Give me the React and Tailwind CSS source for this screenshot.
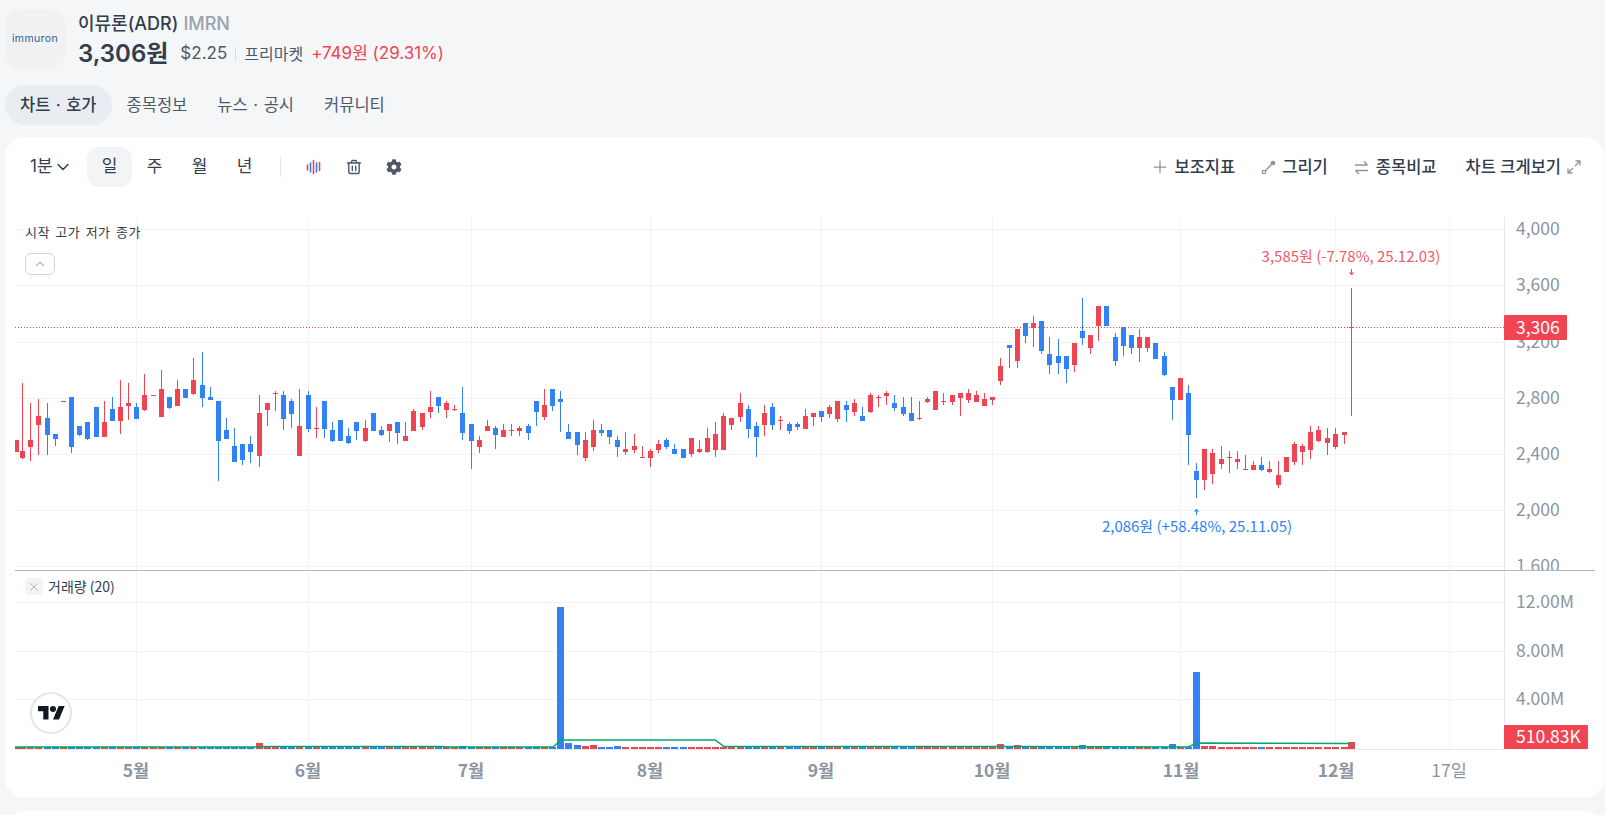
import React from "react";
import { ChevronDown, ChevronUp, Plus, X } from "lucide-react";
import { FaCog } from "react-icons/fa";

const RED = "#f04452";
const BLUE = "#3182f6";

// candles read off the picture: [colour, x, bodyTop, bodyBottom, wickTop, wickBottom], in 3x crop units
const group1 = [
  ["r",48,300,336],["r",67,333,354,129,357],["r",91,300,321,189,363],["r",115,228,255,177,345],["b",142,234,285,189,345],
  ["b",166,282,297,282,318],["r",190,183,186],["b",214,171,321,171,339],["b",238,258,285,258,288],["b",262,246,297,246,300],
  ["b",289,201,291],["r",313,246,291,183,291],["b",337,207,243,171,243],["r",361,201,243,120,282],["r",385,189,198,129,240],
  ["b",409,201,237,189,237],["r",433,165,210,102,213],["r",460,165,168],["r",484,147,231,90,231],["b",508,171,204,171,207],
  ["r",532,147,198,120,198],["b",556,147,174],["r",580,120,162,54,165],["b",607,135,174,36,201],["b",631,171,180,141,180],
  ["b",655,183,303,183,423],["b",679,270,297,234,297],["b",703,318,366,264,366],["b",727,312,360,312,375],["b",751,312,336,288,369],
  ["r",778,219,348,165,381],["r",802,189,210,189,258],["r",826,159,162,153,213],["b",850,165,237,153,270],["b",874,183,222,177,264],
  ["r",898,258,348,147,348],["b",925,165,267,153,276],["r",949,264,267,201,294],["b",973,183,267,183,294],["b",997,270,303,246,306],
];
const group2 = [
  ["b",1,240,303],["b",25,288,309,264,312],["b",49,246,273,246,300],["r",76,264,303,240,306],["b",100,219,273],
  ["b",124,270,285,258,288],["r",148,252,273,252,306],["b",172,246,279,246,312],["r",196,288,303,246,303],["r",220,213,273,207,273],
  ["r",247,219,261,219,270],["r",271,201,216,153,234],["b",295,171,198,171,219],["r",319,189,210,183,234],["r",343,207,210,195,213],
  ["b",367,219,279,141,300],["b",394,252,303,252,387],["r",418,300,321,288,339],["r",442,258,273,240,273],["b",466,264,285,258,327],
  ["r",490,270,291,252,291],["r",514,270,273,252,288],["r",538,264,273,258,288],["b",565,258,279,252,300],["b",589,183,216,183,258],
  ["r",613,195,231,147,240],["b",637,147,198,147,213],["b",661,177,186,153,276],["b",685,276,297,252,297],["b",712,276,315,276,345],
  ["r",736,300,354,276,363],["r",760,270,321,240,333],["b",784,270,279,252,288],["b",808,270,291,270,312],["b",832,300,321,288,351],
  ["r",856,327,336,276,345],["r",883,318,330,282,339],["r",907,351,354,318,354],["r",931,333,354,327,381],["r",955,312,330,300,339],
  ["b",979,300,321,294,327],["b",1003,327,342,312,342],
];
const group3 = [
  ["b",10,507,534],["r",34,474,522,474,531],["r",58,507,516,480,519],["r",82,474,516,444,519],["r",106,462,510,426,531],
  ["r",130,408,510,399,510],["r",154,414,435,414,450],["r",181,369,411,339,426],["b",205,387,447,375,474],["b",229,438,471,426,531],
  ["r",253,399,435,375,468],["b",277,381,435,369,450],["r",301,420,423,408,450],["b",328,432,453,426,462],["b",352,432,441,426,450],
  ["r",376,408,447,387,447],["r",400,399,411,399,438],["b",424,393,411,393,426],["r",448,381,402,375,414],["r",472,363,417,363,426],
  ["b",499,375,390,363,426],["r",523,369,396,357,408],["b",547,408,423,381,423],["r",571,345,396,339,399],["r",595,351,354,345,381],
  ["r",619,339,348,333,375],["b",643,369,384,345,393],["b",670,381,402,351,408],["b",694,399,423,351,423],["r",718,414,417,363,420],
  ["r",742,357,366,351,369],["r",766,333,390],["r",790,363,366,339,375],["r",817,345,366,345,375],["r",841,339,354,339,408],
  ["r",865,339,360,327,369],["r",889,345,366,333,366],["r",913,357,378,339,378],["r",937,351,360,351,375],["r",961,258,303,234,315],
  ["b",988,195,204,195,264],
];
const group4 = [
  ["r",52,147,243,147,264],["b",76,129,168,129,189],["r",100,129,144,108,201],["b",124,123,213,123,222],["b",148,222,255,171,282],
  ["b",175,228,249,177,282],["b",199,228,267,228,309],["r",223,189,255,189,276],["b",247,153,174,54,195],["r",271,165,204,165,222],
  ["r",295,78,138,78,183],["b",319,78,138],["b",346,171,243,159,258],["b",370,141,198,141,228],["b",394,165,204,165,222],
  ["r",418,171,204,147,246],["r",442,171,204,171,216],["b",466,189,237],["b",493,228,285,216,288],["b",517,321,360,321,420],
  ["r",541,294,360],["b",565,339,465,315,555],["b",589,573,600,549,654],["r",613,507,600,507,630],["r",637,519,582,507,612],
  ["r",664,537,552,498,567],["r",688,531,534,513,579],["r",712,537,546,513,567],["r",736,567,570,525,570],["r",760,555,570,543,570],
  ["b",784,555,570,531,573],["r",808,567,576,543,579],["r",835,585,615,543,624],["r",859,531,576],["r",883,492,546,486,555],
  ["r",907,498,516,492,555],["r",931,456,510,438,537],["r",955,450,483,438,486],["r",982,474,489,444,525],["r",1006,462,501,444,507],
];

const toPage = (rows, ox, oy) =>
  rows.map(([c, x, bt, bb, wt = bt, wb = bb]) => ({
    color: c === "r" ? RED : BLUE,
    x: Math.round(x / 3 + ox),
    bodyTop: Math.round(bt / 3 + oy),
    bodyBottom: Math.round(bb / 3 + oy),
    wickTop: Math.round(wt / 3 + oy),
    wickBottom: Math.round(wb / 3 + oy),
  }));

const candles = [
  ...toPage(group1, 0, 340),
  ...toPage(group2, 340, 340),
  ...toPage(group3, 680, 280),
  ...toPage(group4, 1000, 280),
  { color: RED, x: 1344, bodyTop: 432, bodyBottom: 435, wickTop: 432, wickBottom: 444 },
  { color: RED, x: 1351, bodyTop: 327, bodyBottom: 328, wickTop: 288, wickBottom: 416 },
];

const tallVolumes = [
  [259, 6], [299, 3], [462, 3], [560, 142], [568, 6], [576, 4], [584, 3], [592, 4], [616, 3],
  [1000, 5], [1017, 4], [1082, 4], [1172, 5], [1197, 77], [1204, 3], [1212, 3], [1351, 7],
];
const volumeHeight = (x) => {
  const hit = tallVolumes.find(([vx]) => Math.abs(vx - x) <= 3);
  return hit ? hit[1] : 2;
};

const gridX = [136, 308, 471, 650, 821, 992, 1180, 1335, 1449];
const priceLines = [
  [229, "4,000"], [285, "3,600"], [342, "3,200"], [398, "2,800"],
  [454, "2,400"], [510, "2,000"], [566, "1,600"],
];
const volumeLines = [[602, "12.00M"], [651, "8.00M"], [699, "4.00M"]];
const months = [
  [136, "5월"], [308, "6월"], [471, "7월"], [650, "8월"], [821, "9월"],
  [992, "10월"], [1181, "11월"], [1336, "12월"],
];

function Chart() {
  return (
    <svg width="1599" height="581" viewBox="5 217 1599 581" className="absolute inset-0">
      <defs>
        <clipPath id="pricePane"><rect x="15" y="217" width="1590" height="353" /></clipPath>
        <clipPath id="plotArea"><rect x="15" y="217" width="1489" height="532" /></clipPath>
      </defs>

      {gridX.map((x) => (
        <line key={x} x1={x + 0.5} x2={x + 0.5} y1="217" y2="749" stroke="#f2f3f5" />
      ))}
      {priceLines.map(([y]) => (
        <line key={y} x1="15" x2="1504" y1={y + 0.5} y2={y + 0.5} stroke="#f2f3f5" />
      ))}
      {volumeLines.map(([y]) => (
        <line key={y} x1="15" x2="1504" y1={y + 0.5} y2={y + 0.5} stroke="#f2f3f5" />
      ))}

      <g clipPath="url(#plotArea)" shapeRendering="crispEdges">
        {candles.map((c) => (
          <g key={c.x} fill={c.color}>
            <rect x={c.x} y={c.wickTop} width="1" height={c.wickBottom - c.wickTop} />
            <rect x={c.x - 2} y={c.bodyTop} width="5" height={c.bodyBottom - c.bodyTop} />
            <rect x={c.x - 3} y={749 - volumeHeight(c.x)} width="7" height={volumeHeight(c.x)} />
          </g>
        ))}
      </g>

      <polyline
        points="15,747 259,747 268,746.5 440,746.5 449,747 553,747 561,740 715,740 724,746.5 1000,746.5 1188,747 1195,744 1202,743 1351,743.5"
        fill="none"
        stroke="#00a86b"
        strokeWidth="1.5"
      />
      <line x1="15" x2="1504" y1="327.5" y2="327.5" stroke={RED} strokeDasharray="1 2" />

      <line x1="1504.5" x2="1504.5" y1="217" y2="749" stroke="#e5e8eb" />
      <line x1="15" x2="1504" y1="749.5" y2="749.5" stroke="#e5e8eb" />
      <line x1="15" x2="1595" y1="570.5" y2="570.5" stroke="#b0b8c1" />

      <g className="font-['Noto_Sans_CJK_KR',sans-serif] text-[17.5px]" fill="#8b95a1">
        <g clipPath="url(#pricePane)">
          {priceLines.map(([y, label]) => (
            <text key={label} x="1516" y={y + 6}>{label}</text>
          ))}
        </g>
        {volumeLines.map(([y, label]) => (
          <text key={label} x="1516" y={y + 6}>{label}</text>
        ))}
        {months.map(([x, label]) => (
          <text key={label} x={x} y="777" textAnchor="middle" fontWeight="700">{label}</text>
        ))}
        <text x="1449" y="777" textAnchor="middle">17일</text>
      </g>

      <g className="font-['Noto_Sans_CJK_KR',sans-serif] text-[15px]">
        <text x="1351" y="262" textAnchor="middle" fill={RED} fillOpacity="0.9">3,585원 (-7.78%, 25.12.03)</text>
        <path d="M1351.5 269v5M1349.5 272l2 3 2-3" stroke={RED} fill="none" />
        <text x="1197" y="532" textAnchor="middle" fill={BLUE}>2,086원 (+58.48%, 25.11.05)</text>
        <path d="M1196.5 515v-5M1194.5 512l2-3 2 3" stroke={BLUE} fill="none" />
      </g>

      <rect x="1504" y="315" width="63" height="25" rx="1" fill={RED} />
      <text x="1516" y="334" fill="#fff" className="font-['Noto_Sans_CJK_KR',sans-serif] text-[17.5px]">3,306</text>
      <rect x="1504" y="725" width="84" height="24" rx="1" fill={RED} />
      <text x="1516" y="743" fill="#fff" className="font-['Noto_Sans_CJK_KR',sans-serif] text-[17.5px]">510.83K</text>
    </svg>
  );
}

function CandleIcon() {
  return (
    <svg width="16" height="16" viewBox="0 0 16 16" fill="none" strokeWidth="1.6" strokeLinecap="round">
      <path d="M1.5 6v5M7.5 1.5v13M13.5 3.5v8" stroke={RED} />
      <path d="M4.5 4v9M10.5 4v9" stroke={BLUE} />
    </svg>
  );
}

function TrashIcon() {
  return (
    <svg width="16" height="16" viewBox="0 0 16 16" fill="none" stroke="#4e5968" strokeWidth="1.4" strokeLinecap="round">
      <path d="M1.5 4h13M5.5 4V2.8c0-.7.5-1.3 1.2-1.3h2.6c.7 0 1.2.6 1.2 1.3V4" />
      <path d="M2.8 4v8.7c0 1 .8 1.8 1.8 1.8h6.8c1 0 1.8-.8 1.8-1.8V4" />
      <path d="M6.3 7.2v4.3M9.7 7.2v4.3" />
    </svg>
  );
}

function DrawIcon() {
  return (
    <svg width="15" height="15" viewBox="0 0 15 15" fill="none" stroke="#8b95a1" strokeWidth="1.3">
      <circle cx="3" cy="12" r="1.7" />
      <circle cx="12" cy="3" r="1.7" fill="#8b95a1" />
      <path d="M4.3 10.7l6.4-6.4" />
    </svg>
  );
}

function CompareIcon() {
  return (
    <svg width="15" height="15" viewBox="0 0 15 15" fill="none" stroke="#8b95a1" strokeWidth="1.4">
      <path d="M1 5h12.5M10 1.5L13.5 5" />
      <path d="M14 10.5H1.5M5 14l-3.5-3.5" />
    </svg>
  );
}

function ExpandIcon() {
  return (
    <svg width="14" height="14" viewBox="0 0 14 14" fill="none" stroke="#8b95a1" strokeWidth="1.3">
      <path d="M8.5 1h4.5v4.5M13 1L8 6" />
      <path d="M5.5 13H1V8.5M1 13l5-5" />
    </svg>
  );
}

function Header() {
  return (
    <div className="flex pl-[5px] pt-[9px] gap-[13px]">
      <div className="w-[60px] h-[60px] rounded-2xl bg-[#f0f1f3] flex items-center justify-center">
        <span className="text-[10.5px] leading-none tracking-[0.4px] text-[#2c5a9c]">immuron</span>
      </div>
      <div className="flex flex-col">
        <div className="flex items-center gap-[5px] h-7 text-[18px] font-medium">
          <span className="text-[#333d4b]">이뮤론(ADR)</span>
          <span className="text-[#9aa3ad]">IMRN</span>
        </div>
        <div className="flex items-center h-[30px] mt-[2px]">
          <span className="text-[24px] font-semibold text-[#333d4b] mr-3">3,306원</span>
          <span className="text-[17px] text-[#4e5968]">$2.25</span>
          <span className="w-px h-[15px] bg-[#d9dde2] mx-2"></span>
          <span className="text-[16px] text-[#4e5968] mr-2">프리마켓</span>
          <span className="text-[17px] text-[#f04452]">+749원 (29.31%)</span>
        </div>
      </div>
    </div>
  );
}

function Tabs() {
  return (
    <div className="flex pl-[5px] mt-4 text-[16.5px] text-[#4e5968] h-10 [word-spacing:1px]">
      <div className="flex items-center px-[15px] rounded-full bg-[#e9ecf1] font-medium text-[#333d4b]">차트 · 호가</div>
      <div className="flex items-center px-[15px]">종목정보</div>
      <div className="flex items-center px-[15px]">뉴스 · 공시</div>
      <div className="flex items-center px-[15px]">커뮤니티</div>
    </div>
  );
}

function Toolbar() {
  return (
    <div className="flex items-center justify-between h-10 pl-[25px] pr-[23px] text-[17px] text-[#333d4b]">
      <div className="flex items-center">
        <div className="flex items-center w-[57px]">
          <span>1분</span>
          <ChevronDown size={20} strokeWidth={1.8} />
        </div>
        <div className="flex items-center w-[45px] h-10 justify-center rounded-xl bg-[#f2f4f6]">일</div>
        <div className="flex items-center w-[45px] h-10 justify-center">주</div>
        <div className="flex items-center w-[45px] h-10 justify-center">월</div>
        <div className="flex items-center w-[45px] h-10 justify-center">년</div>
        <div className="w-px h-5 bg-[#e5e8eb] mx-[13px]"></div>
        <div className="flex items-center w-10 justify-center"><CandleIcon /></div>
        <div className="flex items-center w-10 justify-center"><TrashIcon /></div>
        <div className="flex items-center w-10 justify-center"><FaCog size={16} color="#4e5968" /></div>
      </div>
      <div className="flex items-center font-medium text-[16.5px]">
        <Plus size={20} strokeWidth={1.5} color="#8b95a1" className="mr-[5px]" />
        <span>보조지표</span>
        <span className="ml-[26px] mr-[6px]"><DrawIcon /></span>
        <span>그리기</span>
        <span className="ml-[26px] mr-[7px]"><CompareIcon /></span>
        <span>종목비교</span>
        <span className="ml-[29px]">차트 크게보기</span>
        <span className="ml-[6px]"><ExpandIcon /></span>
      </div>
    </div>
  );
}

export default function App() {
  return (
    <div className="h-[815px] overflow-hidden bg-[#f5f6f8] font-['Inter','Noto_Sans_CJK_KR',sans-serif]">
      <Header />
      <Tabs />
      <div className="mt-3 ml-[5px] mr-px h-[661px] pt-[10px] rounded-[20px] bg-white">
        <Toolbar />
        <div className="relative h-[581px] mt-[30px] font-['Noto_Sans_CJK_KR',sans-serif]">
          <Chart />
          <div className="absolute left-5 top-[4px] h-[21px] flex items-center bg-white/70 text-[13px] tracking-[0.5px] [word-spacing:2px] text-[#333d4b]">시작 고가 저가 종가</div>
          <div className="absolute left-5 top-9 w-[30px] h-[22px] flex items-center justify-center rounded-md border border-[#d1d6db] bg-white">
            <ChevronUp size={14} strokeWidth={1.8} color="#8b95a1" />
          </div>
          <div className="absolute left-5 top-[359px] flex items-center gap-[5px] text-[14px] text-[#333d4b]">
            <span className="w-[18px] h-[17px] flex items-center justify-center rounded bg-[#f2f4f6]">
              <X size={14} strokeWidth={1.3} color="#9aa3ad" />
            </span>
            <span>거래량 (20)</span>
          </div>
          <div className="absolute left-[25px] top-[475px] w-[42px] h-[42px] rounded-full border-2 border-[#e3e5ec] bg-white flex items-center justify-center">
            <svg width="27" height="21" viewBox="0 0 36 28" fill="#131722">
              <path d="M14 22H7V11H0V4h14v18zM28 22h-8l7.5-18h8L28 22z" />
              <circle cx="20" cy="8" r="4" />
            </svg>
          </div>
        </div>
      </div>
      <div className="mt-[13px] ml-[5px] mr-px h-10 rounded-t-[20px] bg-white"></div>
    </div>
  );
}
